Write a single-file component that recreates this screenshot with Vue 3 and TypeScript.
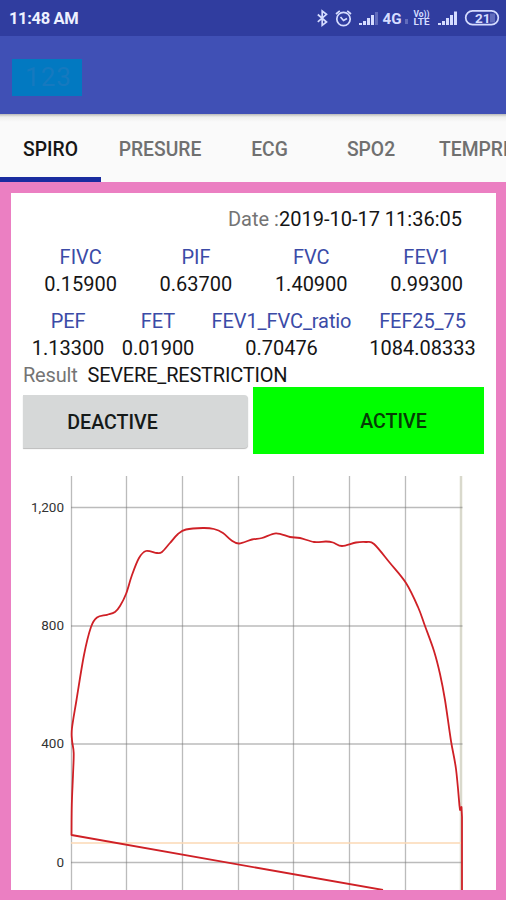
<script setup lang="ts">
interface Metric {
  label: string
  value: string
}

type Point = [number, number]

const tabs = ['SPIRO', 'PRESURE', 'ECG', 'SPO2', 'TEMPRE']

const volumes: Metric[] = [
  { label: 'FIVC', value: '0.15900' },
  { label: 'PIF', value: '0.63700' },
  { label: 'FVC', value: '1.40900' },
  { label: 'FEV1', value: '0.99300' },
]

const flows: Metric[] = [
  { label: 'PEF', value: '1.13300' },
  { label: 'FET', value: '0.01900' },
  { label: 'FEV1_FVC_ratio', value: '0.70476' },
  { label: 'FEF25_75', value: '1084.08333' },
]

const gridX = [60.5, 115.5, 171.5, 227.5, 282.5, 338.5, 394.5]
const gridY = [
  { y: 47.5, label: '1,200' },
  { y: 166, label: '800' },
  { y: 284, label: '400' },
  { y: 402.5, label: '0' },
]

const samples: Point[] = [
  [60.5, 375], [60.8, 345], [62, 315], [62.7, 293], [61, 280], [61, 268], [65.5, 240],
  [73, 195], [80, 167], [86, 157.5], [96, 154.8], [104, 152], [109, 146], [115, 134],
  [121, 115], [128, 98], [135, 91], [146, 93], [151, 92], [159, 83], [167, 74],
  [175, 69.5], [192, 68], [203, 69], [212, 73], [220, 80], [228, 83.5], [241, 79.5],
  [251, 78], [265, 73.3], [279, 77], [289, 78], [303, 82], [315, 81.5], [322, 82.5],
  [331, 86], [345, 82.5], [355, 82], [363, 84], [379, 103], [395, 123],
  [407, 147], [414, 166], [423, 191], [429, 214], [434, 240], [440, 281], [445, 309],
  [448.5, 346],
]

// Catmull-Rom spline through the samples, written as cubic Bézier segments
function smooth(points: Point[]): string {
  let d = ''
  for (let i = 0; i < points.length - 1; i++) {
    const p0 = points[Math.max(i - 1, 0)]
    const p1 = points[i]
    const p2 = points[i + 1]
    const p3 = points[Math.min(i + 2, points.length - 1)]
    d += ` C${p1[0] + (p2[0] - p0[0]) / 6} ${p1[1] + (p2[1] - p0[1]) / 6}`
    d += ` ${p2[0] - (p3[0] - p1[0]) / 6} ${p2[1] - (p3[1] - p1[1]) / 6}`
    d += ` ${p2[0]} ${p2[1]}`
  }
  return d
}

const curve = `M372 430 L60.5 375${smooth(samples)} L449 350 L450.5 347 L451 357 V430`
</script>

<template>
  <div class="screen">
    <header class="status">
      <span class="clock">11:48 AM</span>
      <svg class="status-icons" width="190" height="36" viewBox="0 0 190 36">
        <path class="line" d="M1.8 14.5 L10.5 22 L6.2 25.3 V11 L10.5 14.3 L1.8 21.8" />
        <g class="line">
          <circle cx="27.5" cy="19" r="6.7" />
          <path d="M20 14 L23.8 10.8 M31.2 10.8 L35 14 M24.5 17 L27.5 20.5 L31 18.5" />
        </g>
        <g class="fill">
          <path d="M43 25v-2h3v2zM47 25v-4h3v4zM51 25v-7h3v7zM55 25V15h3v10z" />
          <path class="faint" d="M59 25V12h3v13z" />
          <path class="faint" d="M89 19h3v5h-3z" />
          <path d="M122 25v-2h3v2zM126 25v-4h3v4zM130 25v-7h3v7zM134 25V15h3v10zM138 25V11.5h3V25z" />
        </g>
        <text class="net" x="66.5" y="24" textLength="19" lengthAdjust="spacingAndGlyphs">4G</text>
        <text class="volte" x="97.500" y="17.3" textLength="16" lengthAdjust="spacingAndGlyphs">Vo))</text>
        <text class="volte" x="97.500" y="25.3" textLength="16" lengthAdjust="spacingAndGlyphs">LTE</text>
        <rect class="faint fill" x="174" y="13.5" width="5" height="9" />
        <rect class="line" x="149.7" y="10.9" width="32.6" height="13.8" rx="6.9" />
        <text class="level" x="159" y="22.7">21</text>
      </svg>
    </header>

    <div class="toolbar">
      <div class="badge">123</div>
    </div>

    <nav class="tabs">
      <div v-for="(tab, i) in tabs" :key="tab" class="tab" :class="{ selected: i === 0 }">
        {{ tab }}
      </div>
    </nav>

    <main class="frame">
      <section class="card">
        <div class="date"><span class="muted">Date :</span>2019-10-17 11:36:05</div>

        <div class="metrics volumes">
          <div v-for="m in volumes" :key="m.label" class="metric">
            <span class="name">{{ m.label }}</span>
            <span>{{ m.value }}</span>
          </div>
        </div>
        <div class="metrics flows">
          <div v-for="m in flows" :key="m.label" class="metric">
            <span class="name">{{ m.label }}</span>
            <span>{{ m.value }}</span>
          </div>
        </div>

        <div class="result"><span class="muted">Result</span><span>SEVERE_RESTRICTION</span></div>

        <div class="actions">
          <button class="deactive">DEACTIVE</button>
          <button class="active">ACTIVE</button>
        </div>

        <svg class="chart" width="485" height="430" viewBox="0 0 485 430">
          <line v-for="x in gridX" :key="x" class="grid" :x1="x" :x2="x" y1="16" y2="430" />
          <line class="edge" x1="450" x2="450" y1="16" y2="430" />
          <g v-for="row in gridY" :key="row.label">
            <line class="grid" x1="60" x2="451.5" :y1="row.y" :y2="row.y" />
            <text class="axis" x="53" :y="row.y + 4.2">{{ row.label }}</text>
          </g>
          <line class="limit" x1="60" x2="451" y1="383" y2="383" />
          <path class="curve" :d="curve" />
        </svg>
      </section>
    </main>
  </div>
</template>

<style>
body {
  margin: 0;
}
</style>

<style scoped>
.screen {
  display: flex;
  flex-direction: column;
  width: 506px;
  height: 900px;
  overflow: hidden;
  background: #fafafa;
  color: #151515;
  font: 400 20px/24px Roboto, sans-serif;
}
.status {
  display: flex;
  justify-content: space-between;
  flex: none;
  height: 36px;
  padding: 0 0 0 9px;
  background: #303d9f;
}
.clock {
  color: #edf1ff;
  font-size: 16.5px;
  font-weight: 700;
  line-height: 38px;
  letter-spacing: -0.35px;
}
.status-icons .line {
  fill: none;
  stroke: #d5dcff;
  stroke-width: 1.7;
}
.status-icons .fill,
.status-icons text {
  fill: #d5dcff;
}
.status-icons .faint {
  opacity: 0.3;
}
.status-icons text {
  font-weight: 700;
}
.status-icons .net {
  font-size: 14.5px;
}
.status-icons .volte {
  font-size: 9px;
}
.status-icons .level {
  font-size: 13.5px;
}
.toolbar {
  flex: none;
  box-sizing: border-box;
  height: 78px;
  padding: 23px 12px 0;
  background: #4050b5;
}
.badge {
  width: 70px;
  height: 37px;
  box-sizing: border-box;
  padding-left: 3px;
  background: #0279c1;
  color: #1679bf;
  font-size: 26px;
  line-height: 37px;
  text-align: center;
  letter-spacing: 1px;
}
.tabs {
  display: flex;
  flex: none;
  height: 68px;
  overflow: hidden;
  background: linear-gradient(#b9bab8, #eeefed 3px, #fafafa 8px);
}
.tab {
  flex: none;
  box-sizing: border-box;
  padding: 0 23px;
  color: #707070;
  font-size: 19.3px;
  font-weight: 500;
  line-height: 72px;
  text-align: center;
}
.tab:nth-child(1) {
  width: 101px;
}
.tab:nth-child(2) {
  width: 118px;
  padding: 0;
}
.tab:nth-child(3) {
  width: 101px;
}
.tab:nth-child(4) {
  width: 102px;
}
.tab:nth-child(5) {
  padding: 0 17px;
}
.tab.selected {
  height: 68px;
  border-bottom: 5px solid #192c9f;
  color: #161616;
}
.frame {
  flex: none;
  box-sizing: border-box;
  height: 718px;
  padding: 11px 10px 10px 11px;
  background: #eb7fc2;
}
.card {
  display: flex;
  flex-direction: column;
  height: 697px;
  overflow: hidden;
  background: #fff;
}
.date {
  margin: 14px 34px 13px 0;
  text-align: right;
}
.muted {
  color: #747474;
}
.metrics {
  display: grid;
  margin-left: 12px;
}
.volumes {
  grid-template-columns: repeat(4, 115.3px);
  margin-bottom: 10px;
}
.flows {
  grid-template-columns: 90px 90px 157px 125px;
  margin-bottom: 1px;
}
.flows .name {
  letter-spacing: -0.1px;
}
.metric {
  display: flex;
  flex-direction: column;
  align-items: center;
  line-height: 27px;
}
.name {
  color: #3b4ba7;
}
.result {
  display: flex;
  gap: 10px;
  margin: 0 0 0 12px;
  letter-spacing: -0.2px;
}
.actions {
  display: flex;
  align-items: center;
  gap: 5px;
  height: 67px;
  margin: 0 0 6px 12px;
}
button {
  box-sizing: border-box;
  border: 0;
  padding: 3px 0 0;
  color: #151a19;
  font: 500 19.6px/24px Roboto, sans-serif;
}
.deactive {
  width: 225px;
  height: 53px;
  margin-top: 2px;
  padding: 2px 46px 0 0;
  border-radius: 0 4px 4px 0;
  background: #d6d8d8;
  box-shadow: 0 1px 1px #bbb;
}
.active {
  width: 231px;
  height: 67px;
  padding-left: 50px;
  background: #0f0;
  color: #063b06;
}
.chart {
  flex: none;
  display: block;
}
.grid {
  stroke: #777;
  stroke-opacity: 0.5;
  stroke-width: 1.3;
}
.edge {
  stroke: #d9d9cc;
  stroke-width: 2.5;
}
.limit {
  stroke: #fbd9b5;
  stroke-width: 1.3;
}
.axis {
  fill: #333;
  font-size: 13.5px;
  text-anchor: end;
}
.curve {
  fill: none;
  stroke: #cf2026;
  stroke-width: 1.8;
  stroke-linejoin: round;
}
</style>
